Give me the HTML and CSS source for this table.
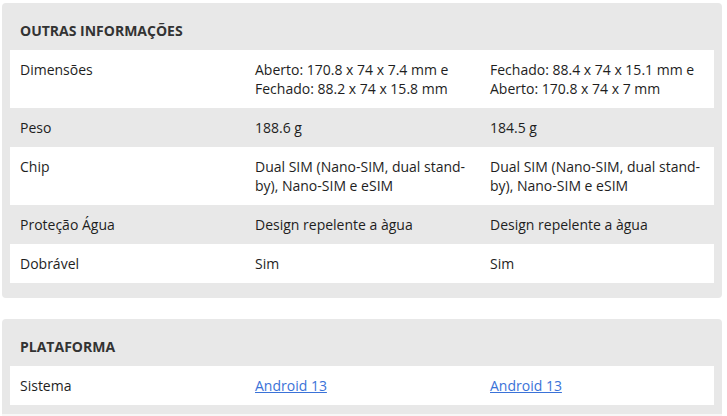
FILE: index.html
```html
<!DOCTYPE html>
<html lang="pt">
<head>
<meta charset="utf-8">
<link rel="stylesheet" href="styles.css">
</head>
<body>
<section class="card">
  <h2 class="card-title">Outras informações</h2>
  <div class="spec-table">
    <div class="row"><div class="cell">Dimensões</div><div class="cell">Aberto: 170.8 x 74 x 7.4 mm e Fechado: 88.2 x 74 x 15.8 mm</div><div class="cell">Fechado: 88.4 x 74 x 15.1 mm e Aberto: 170.8 x 74 x 7 mm</div></div>
    <div class="row"><div class="cell">Peso</div><div class="cell">188.6 g</div><div class="cell">184.5 g</div></div>
    <div class="row"><div class="cell">Chip</div><div class="cell">Dual SIM (Nano-SIM, dual stand-by), Nano-SIM e eSIM</div><div class="cell">Dual SIM (Nano-SIM, dual stand-by), Nano-SIM e eSIM</div></div>
    <div class="row"><div class="cell">Proteção Água</div><div class="cell">Design repelente a àgua</div><div class="cell">Design repelente a àgua</div></div>
    <div class="row"><div class="cell">Dobrável</div><div class="cell">Sim</div><div class="cell">Sim</div></div>
  </div>
</section>
<section class="card card-last">
  <h2 class="card-title">Plataforma</h2>
  <div class="spec-table">
    <div class="row"><div class="cell">Sistema</div><div class="cell"><a href="#">Android 13</a></div><div class="cell"><a href="#">Android 13</a></div></div>
  </div>
</section>
<div class="page-bottom"></div>
</body>
</html>
```
FILE: styles.css
```css
html, body { background: #fff; }
body {
  margin: 3px 5px 0 2px;
  font-family: "Open Sans", "Noto Sans", sans-serif;
  font-size: 14px;
  color: #1e1e1e;
}
.card {
  background: #e8e8e8;
  border-radius: 4px;
  padding: 8px 8px 15px 8px;
  margin-bottom: 21px;
}
.card-last { padding-bottom: 9px; margin-bottom: 0; border-radius: 4px 4px 0 0; }
.card-title {
  margin: 0;
  padding: 10px 10px;
  line-height: 19px;
  font-size: 14px;
  font-weight: 700;
  text-transform: uppercase;
  color: #333;
}
.spec-table { display: flex; flex-direction: column; }
.row {
  display: grid;
  grid-template-columns: 235px 235px 235px;
}
.row:nth-child(odd) { background: #fff; }
.cell {
  padding: 10px 10px;
  line-height: 19px;
}
.cell a { color: #3a72d8; }
.page-bottom { height: 10px; background: #f7f7f7; margin: 0 -5px 0 -2px; }
```
